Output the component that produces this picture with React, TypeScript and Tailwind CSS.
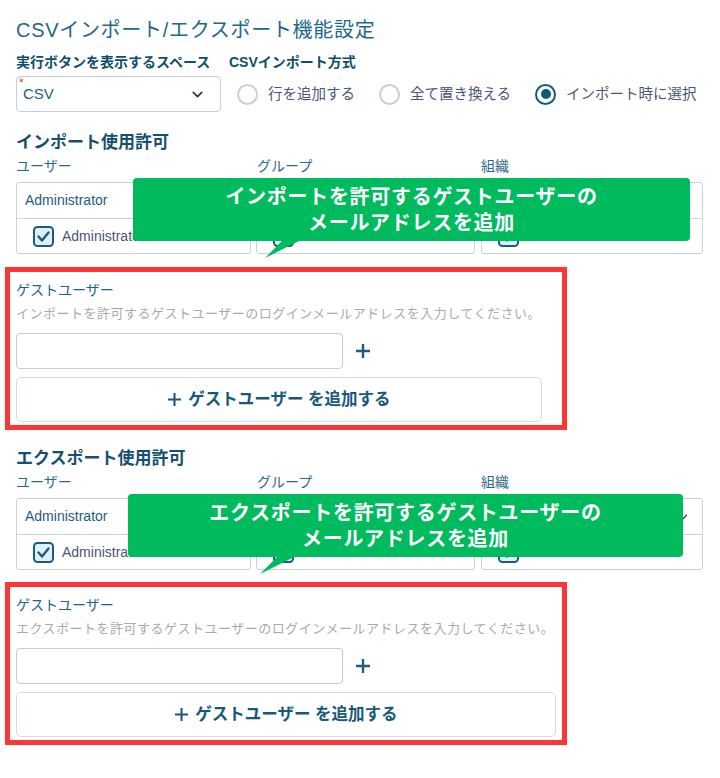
import React from "react";
import { ChevronDown } from "lucide-react";

const CheckBox: React.FC = () => (
  <svg width="21" height="21" viewBox="0 0 21 21" className="shrink-0">
    <rect x="1" y="1" width="19" height="19" rx="3.5" fill="#e1effa" stroke="#1c5b7b" strokeWidth="2" />
    <path d="M5.5 10.5 L9 14.5 L15.5 6.5" fill="none" stroke="#1c5b7b" strokeWidth="2.4" strokeLinecap="round" strokeLinejoin="round" />
  </svg>
);

const PlusMark: React.FC<{ size: number; stroke: number }> = ({ size, stroke }) => (
  <svg width={size} height={size} viewBox="0 0 16 16" className="shrink-0">
    <path d="M8 1v14M1 8h14" stroke="currentColor" strokeWidth={stroke} />
  </svg>
);

const Radio: React.FC<{ label: string; checked?: boolean }> = ({ label, checked }) => (
  <div className="flex items-center gap-[10px]">
    {checked ? (
      <span className="flex h-[21px] w-[21px] items-center justify-center rounded-full border-[2.5px] border-[#0f5a7c]">
        <span className="h-[10px] w-[10px] rounded-full bg-[#0f5a7c]" />
      </span>
    ) : (
      <span className="h-[21px] w-[21px] rounded-full border-2 border-[#c8cfda]" />
    )}
    <span className="text-[14.5px] leading-[20px] text-[#4b5675]">{label}</span>
  </div>
);

// ユーザー / グループ / 組織 の選択ボックス
const PermBox: React.FC<{ value?: string; item?: string; width: string }> = ({ value, item, width }) => (
  <div className={`flex flex-col rounded-[3px] border border-[#cdd1da] ${width}`}>
    <div className="flex h-[36px] items-center justify-between border-b border-[#cdd1da] pl-[8px] pr-[12px]">
      <span className="text-[14px] text-[#1f5c7c]">{value}</span>
      <ChevronDown size={14} strokeWidth={2.5} className="text-[#3b4a5c]" />
    </div>
    <div className="flex h-[34px] items-center gap-[8px] pl-[16px]">
      <CheckBox />
      {item && <span className="text-[14px] text-[#4b5571]">{item}</span>}
    </div>
  </div>
);

const Callout: React.FC<{ lines: string[]; pos: string }> = ({ lines, pos }) => (
  <div className={`absolute h-[63px] ${pos}`}>
    <div className="flex h-full flex-col items-center justify-center rounded-[4px] bg-[#00ba5e] text-[20px] font-bold leading-[26px] tracking-[0.7px] text-white">
      {lines.map((l) => (
        <span key={l}>{l}</span>
      ))}
    </div>
    <svg width="45" height="18" viewBox="0 0 45 18" className="absolute left-[128px] top-[62px]">
      <polygon points="4,18 22,0 40,0" fill="#00ba5e" />
    </svg>
  </div>
);

const PermSection: React.FC<{ title: string; callout: string[]; calloutPos: string }> = ({
  title,
  callout,
  calloutPos,
}) => (
  <div className="relative">
    <h2 className="text-[17px] font-bold leading-[24px] text-[#15506f]">{title}</h2>
    <div className="mt-[1px] flex">
      <div className="w-[235px]">
        <div className="text-[14px] leading-[20px] text-[#2b6a8a]">ユーザー</div>
        <PermBox value="Administrator" item="Administrator" width="mt-[6px] w-[235px]" />
      </div>
      <div className="ml-[5px] w-[219px]">
        <div className="pl-[1px] text-[14px] leading-[20px] text-[#2b6a8a]">グループ</div>
        <PermBox width="mt-[6px] w-[219px]" />
      </div>
      <div className="ml-[6px] w-[222px]">
        <div className="text-[14px] leading-[20px] text-[#2b6a8a]">組織</div>
        <PermBox width="mt-[6px] w-[222px]" />
      </div>
    </div>
    <Callout lines={callout} pos={calloutPos} />
  </div>
);

const GuestBox: React.FC<{ help: string; buttonWidth: string; className: string }> = ({
  help,
  buttonWidth,
  className,
}) => (
  <div className={`-ml-[11px] w-[562px] border-[5px] border-[#fd3535] pb-[3px] pl-[6px] pt-[8px] ${className}`}>
    <div className="text-[14px] leading-[20px] text-[#1d6283]">ゲストユーザー</div>
    <div className="mt-[4px] text-[13px] leading-[20px] tracking-[0.5px] text-[#aaaaaa]">{help}</div>
    <div className="mt-[9px] flex items-center">
      <div className="h-[36px] w-[327px] rounded-[4px] border border-[#c6cad3]" />
      <span className="ml-[12px] text-[#1d5d7e]">
        <PlusMark size={16} stroke={2.4} />
      </span>
    </div>
    <button
      className={`mt-[8px] flex h-[45px] items-center justify-center gap-[6px] rounded-[5px] border border-[#d3dbe5] text-[16.5px] font-bold text-[#17597a] ${buttonWidth}`}
    >
      <PlusMark size={15} stroke={2.2} />
      <span>ゲストユーザー を追加する</span>
    </button>
  </div>
);

const App: React.FC = () => {
  return (
    <div className="min-h-[778px] w-[720px] bg-white px-4 pt-4 font-['Liberation_Sans','Noto_Sans_CJK_JP',sans-serif]">
      {/* タイトル */}
      <h1 className="text-[20px] leading-[28px] tracking-[0.7px] text-[#1e6889]">CSVインポート/エクスポート機能設定</h1>

      {/* 実行ボタン / インポート方式 */}
      <div className="mt-[8px] flex text-[14px] font-bold leading-[20px] text-[#0e4d6b]">
        <span className="w-[213px]">実行ボタンを表示するスペース</span>
        <span>CSVインポート方式</span>
      </div>
      <div className="mt-[4px] flex items-center">
        <div className="relative flex h-[36px] w-[205px] items-center justify-between rounded-[4px] border border-[#c9cdd8] pl-[6px] pr-[14px]">
          <span className="absolute left-[2px] top-[0px] text-[12px] leading-[12px] text-[#e23b3b]">*</span>
          <span className="text-[15px] text-[#1b5f83]">CSV</span>
          <ChevronDown size={17} strokeWidth={2.5} className="text-[#2d3b4e]" />
        </div>
        <div className="ml-[16px] flex items-center gap-[24px]">
          <Radio label="行を追加する" />
          <Radio label="全て置き換える" />
          <Radio label="インポート時に選択" checked />
        </div>
      </div>

      {/* インポート */}
      <div className="mt-[19px]">
        <PermSection
          title="インポート使用許可"
          callout={["インポートを許可するゲストユーザーの", "メールアドレスを追加"]}
          calloutPos="left-[117px] top-[47px] w-[557px]"
        />
      </div>
      <GuestBox
        className="mt-[13px]"
        help="インポートを許可するゲストユーザーのログインメールアドレスを入力してください。"
        buttonWidth="w-[526px]"
      />

      {/* エクスポート */}
      <div className="mt-[17px]">
        <PermSection
          title="エクスポート使用許可"
          callout={["エクスポートを許可するゲストユーザーの", "メールアドレスを追加"]}
          calloutPos="left-[112px] top-[47px] w-[555px]"
        />
      </div>
      <GuestBox
        className="mt-[12px]"
        help="エクスポートを許可するゲストユーザーのログインメールアドレスを入力してください。"
        buttonWidth="w-[540px]"
      />
    </div>
  );
};

export default App;
